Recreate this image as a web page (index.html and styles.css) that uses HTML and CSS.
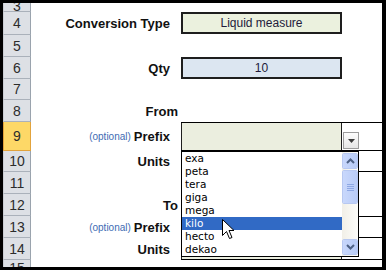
FILE: index.html
```html
<!DOCTYPE html>
<html lang="en">
<head>
    <meta charset="UTF-8">
    <title>Unit Converter</title>
    <link rel="stylesheet" href="styles.css">
</head>
<body>
    <div class="sheet">
        <div class="row r-cut-top">
            <div class="hd">3</div>
            <div class="lbl"></div>
            <div class="val"></div>
        </div>
        <div class="row r-23">
            <div class="hd">4</div>
            <div class="lbl">Conversion Type</div>
            <div class="val"><div class="box green">Liquid measure</div></div>
        </div>
        <div class="row">
            <div class="hd">5</div>
            <div class="lbl"></div>
            <div class="val"></div>
        </div>
        <div class="row">
            <div class="hd">6</div>
            <div class="lbl">Qty</div>
            <div class="val"><div class="box blue">10</div></div>
        </div>
        <div class="row r-21">
            <div class="hd">7</div>
            <div class="lbl"></div>
            <div class="val"></div>
        </div>
        <div class="row">
            <div class="hd">8</div>
            <div class="lbl heading">From</div>
            <div class="val"></div>
        </div>
        <div class="row r-29">
            <div class="hd sel">9</div>
            <div class="lbl"><span class="opt">(optional)</span> Prefix</div>
            <div class="val field field-top"><div class="box pale"></div></div>
        </div>
        <div class="row r-21">
            <div class="hd">10</div>
            <div class="lbl">Units</div>
            <div class="val field"><div class="box pale"></div></div>
        </div>
        <div class="row">
            <div class="hd">11</div>
            <div class="lbl"></div>
            <div class="val"></div>
        </div>
        <div class="row">
            <div class="hd">12</div>
            <div class="lbl heading">To</div>
            <div class="val"></div>
        </div>
        <div class="row">
            <div class="hd">13</div>
            <div class="lbl"><span class="opt">(optional)</span> Prefix</div>
            <div class="val field field-top"><div class="box pale"></div></div>
        </div>
        <div class="row">
            <div class="hd">14</div>
            <div class="lbl">Units</div>
            <div class="val field"><div class="box pale"></div></div>
        </div>
        <div class="row r-cut-end">
            <div class="hd">15</div>
            <div class="lbl"></div>
            <div class="val"></div>
        </div>

        <!-- data validation arrow for row 9 -->
        <div class="dd-btn">
            <svg width="7" height="4" viewBox="0 0 7 4"><path d="M0 0H7L3.5 4Z" fill="#3c3c3c"/></svg>
        </div>

        <!-- open dropdown list -->
        <div class="dd-list">
            <ul class="items">
                <li>exa</li>
                <li>peta</li>
                <li>tera</li>
                <li>giga</li>
                <li>mega</li>
                <li class="on">kilo</li>
                <li>hecto</li>
                <li>dekao</li>
            </ul>
            <div class="scroll">
                <div class="sb-btn">
                    <svg width="9" height="6" viewBox="0 0 9 6"><path d="M1 5L4.5 1.5L8 5" fill="none" stroke="#4d6185" stroke-width="2"/></svg>
                </div>
                <div class="sb-thumb">
                    <span></span><span></span><span></span><span></span>
                </div>
                <div class="sb-track"></div>
                <div class="sb-btn">
                    <svg width="9" height="6" viewBox="0 0 9 6"><path d="M1 1L4.5 4.5L8 1" fill="none" stroke="#4d6185" stroke-width="2"/></svg>
                </div>
            </div>
        </div>

        <svg class="cursor" width="13" height="21" viewBox="0 0 13 21">
            <path d="M0.5 0.5V16.5L4.5 12.5L7.5 19.5L10 18.5L7 11.5H12Z" fill="#fff" stroke="#000" stroke-width="1" stroke-linejoin="round"/>
        </svg>
    </div>
</body>
</html>
```

FILE: styles.css
```css
* {
    margin: 0;
    padding: 0;
    box-sizing: border-box;
}

body {
    background: #fff;
    font-family: 'Liberation Sans', Arial, sans-serif;
}

.sheet {
    position: relative;
    width: 386px;
    height: 270px;
    border: 3px solid #000;
    border-right-width: 4px;
    background: #fff;
    display: flex;
    flex-direction: column;
    overflow: hidden;
}

.row {
    display: flex;
    height: 22px;
    flex-shrink: 0;
}

.r-cut-top { height: 9px; }
.r-21 { height: 21px; }
.r-23 { height: 23px; }
.r-29 { height: 29px; }
.r-cut-end { height: 7px; }

/* row numbers */
.hd {
    width: 28px;
    flex-shrink: 0;
    background: #dde0e5;
    border-left: 1px solid #c9cdd3;
    border-right: 1px solid #9aa3ad;
    border-bottom: 1px solid #aab1ba;
    color: #2c2c2c;
    font-size: 14px;
    display: flex;
    align-items: center;
    justify-content: center;
    overflow: hidden;
}

.r-cut-top .hd {
    align-items: flex-end;
    line-height: 10px;
}

.r-cut-end .hd {
    align-items: flex-start;
    border-bottom: none;
}

.hd.sel {
    background: #fdd867;
    border-color: #e2a33c;
    border-left-color: #e2a33c;
}

.lbl {
    width: 150px;
    flex-shrink: 0;
    padding-right: 11px;
    display: flex;
    align-items: center;
    justify-content: flex-end;
    font-size: 13px;
    font-weight: bold;
    color: #111;
    white-space: nowrap;
}

.lbl.heading {
    padding-right: 3px;
}

.opt {
    font-weight: normal;
    font-size: 10px;
    color: #3d6bb3;
    margin-right: 3px;
}

.val {
    flex: 1;
    display: flex;
}

.field {
    border-bottom: 1px solid #000;
}

.field-top {
    border-top: 1px solid #000;
}

.box {
    width: 161px;
    height: 100%;
    border: 2px solid #1e1e1e;
    display: flex;
    align-items: center;
    justify-content: center;
    font-size: 12px;
    color: #221a3a;
}

.r-23 .box,
.row .box.blue {
    height: 22px;
}

.green { background: #ebf1de; }
.blue { background: #dce6f1; }
.pale { background: #ebeedf; }

.field .box {
    border-top: none;
    border-bottom: none;
    border-left-width: 1px;
    border-right-width: 1px;
}

/* validation drop arrow */
.dd-btn {
    position: absolute;
    left: 340px;
    top: 129px;
    width: 16px;
    height: 17px;
    border: 1px solid #9c9c9c;
    background: linear-gradient(#fdfdfd, #e6e6e6);
    display: flex;
    align-items: center;
    justify-content: center;
}

.dd-list {
    position: absolute;
    left: 178px;
    top: 148px;
    width: 178px;
    height: 106px;
    border: 1px solid #000;
    background: #fff;
    display: flex;
}

.items {
    flex: 1;
    list-style: none;
    font-family: 'DejaVu Sans', Tahoma, sans-serif;
    font-size: 10.5px;
    color: #000;
}

.items li {
    height: 13px;
    line-height: 13px;
    padding-left: 3px;
}

.items li.on {
    background: #316ac5;
    color: #fff;
}

.scroll {
    width: 16px;
    display: flex;
    flex-direction: column;
    background: linear-gradient(to right, #f1efe7, #fdfdfa);
}

.sb-btn {
    height: 16px;
    margin: 1px 0;
    border: 1px solid #fff;
    outline: 1px solid #b7c8f1;
    outline-offset: -1px;
    border-radius: 2px;
    background: linear-gradient(to right, #c8d7fc, #b7cbf6);
    display: flex;
    align-items: center;
    justify-content: center;
}

.sb-thumb {
    height: 34px;
    border: 1px solid #fff;
    outline: 1px solid #b7c8f1;
    outline-offset: -1px;
    border-radius: 2px;
    background: linear-gradient(to right, #c9d8fc, #b9ccf7);
    display: flex;
    flex-direction: column;
    align-items: center;
    justify-content: center;
    gap: 1px;
}

.sb-thumb span {
    width: 7px;
    height: 1px;
    background: #8ea8e4;
}

.sb-track {
    flex: 1;
}

.cursor {
    position: absolute;
    left: 219px;
    top: 216px;
}
```
